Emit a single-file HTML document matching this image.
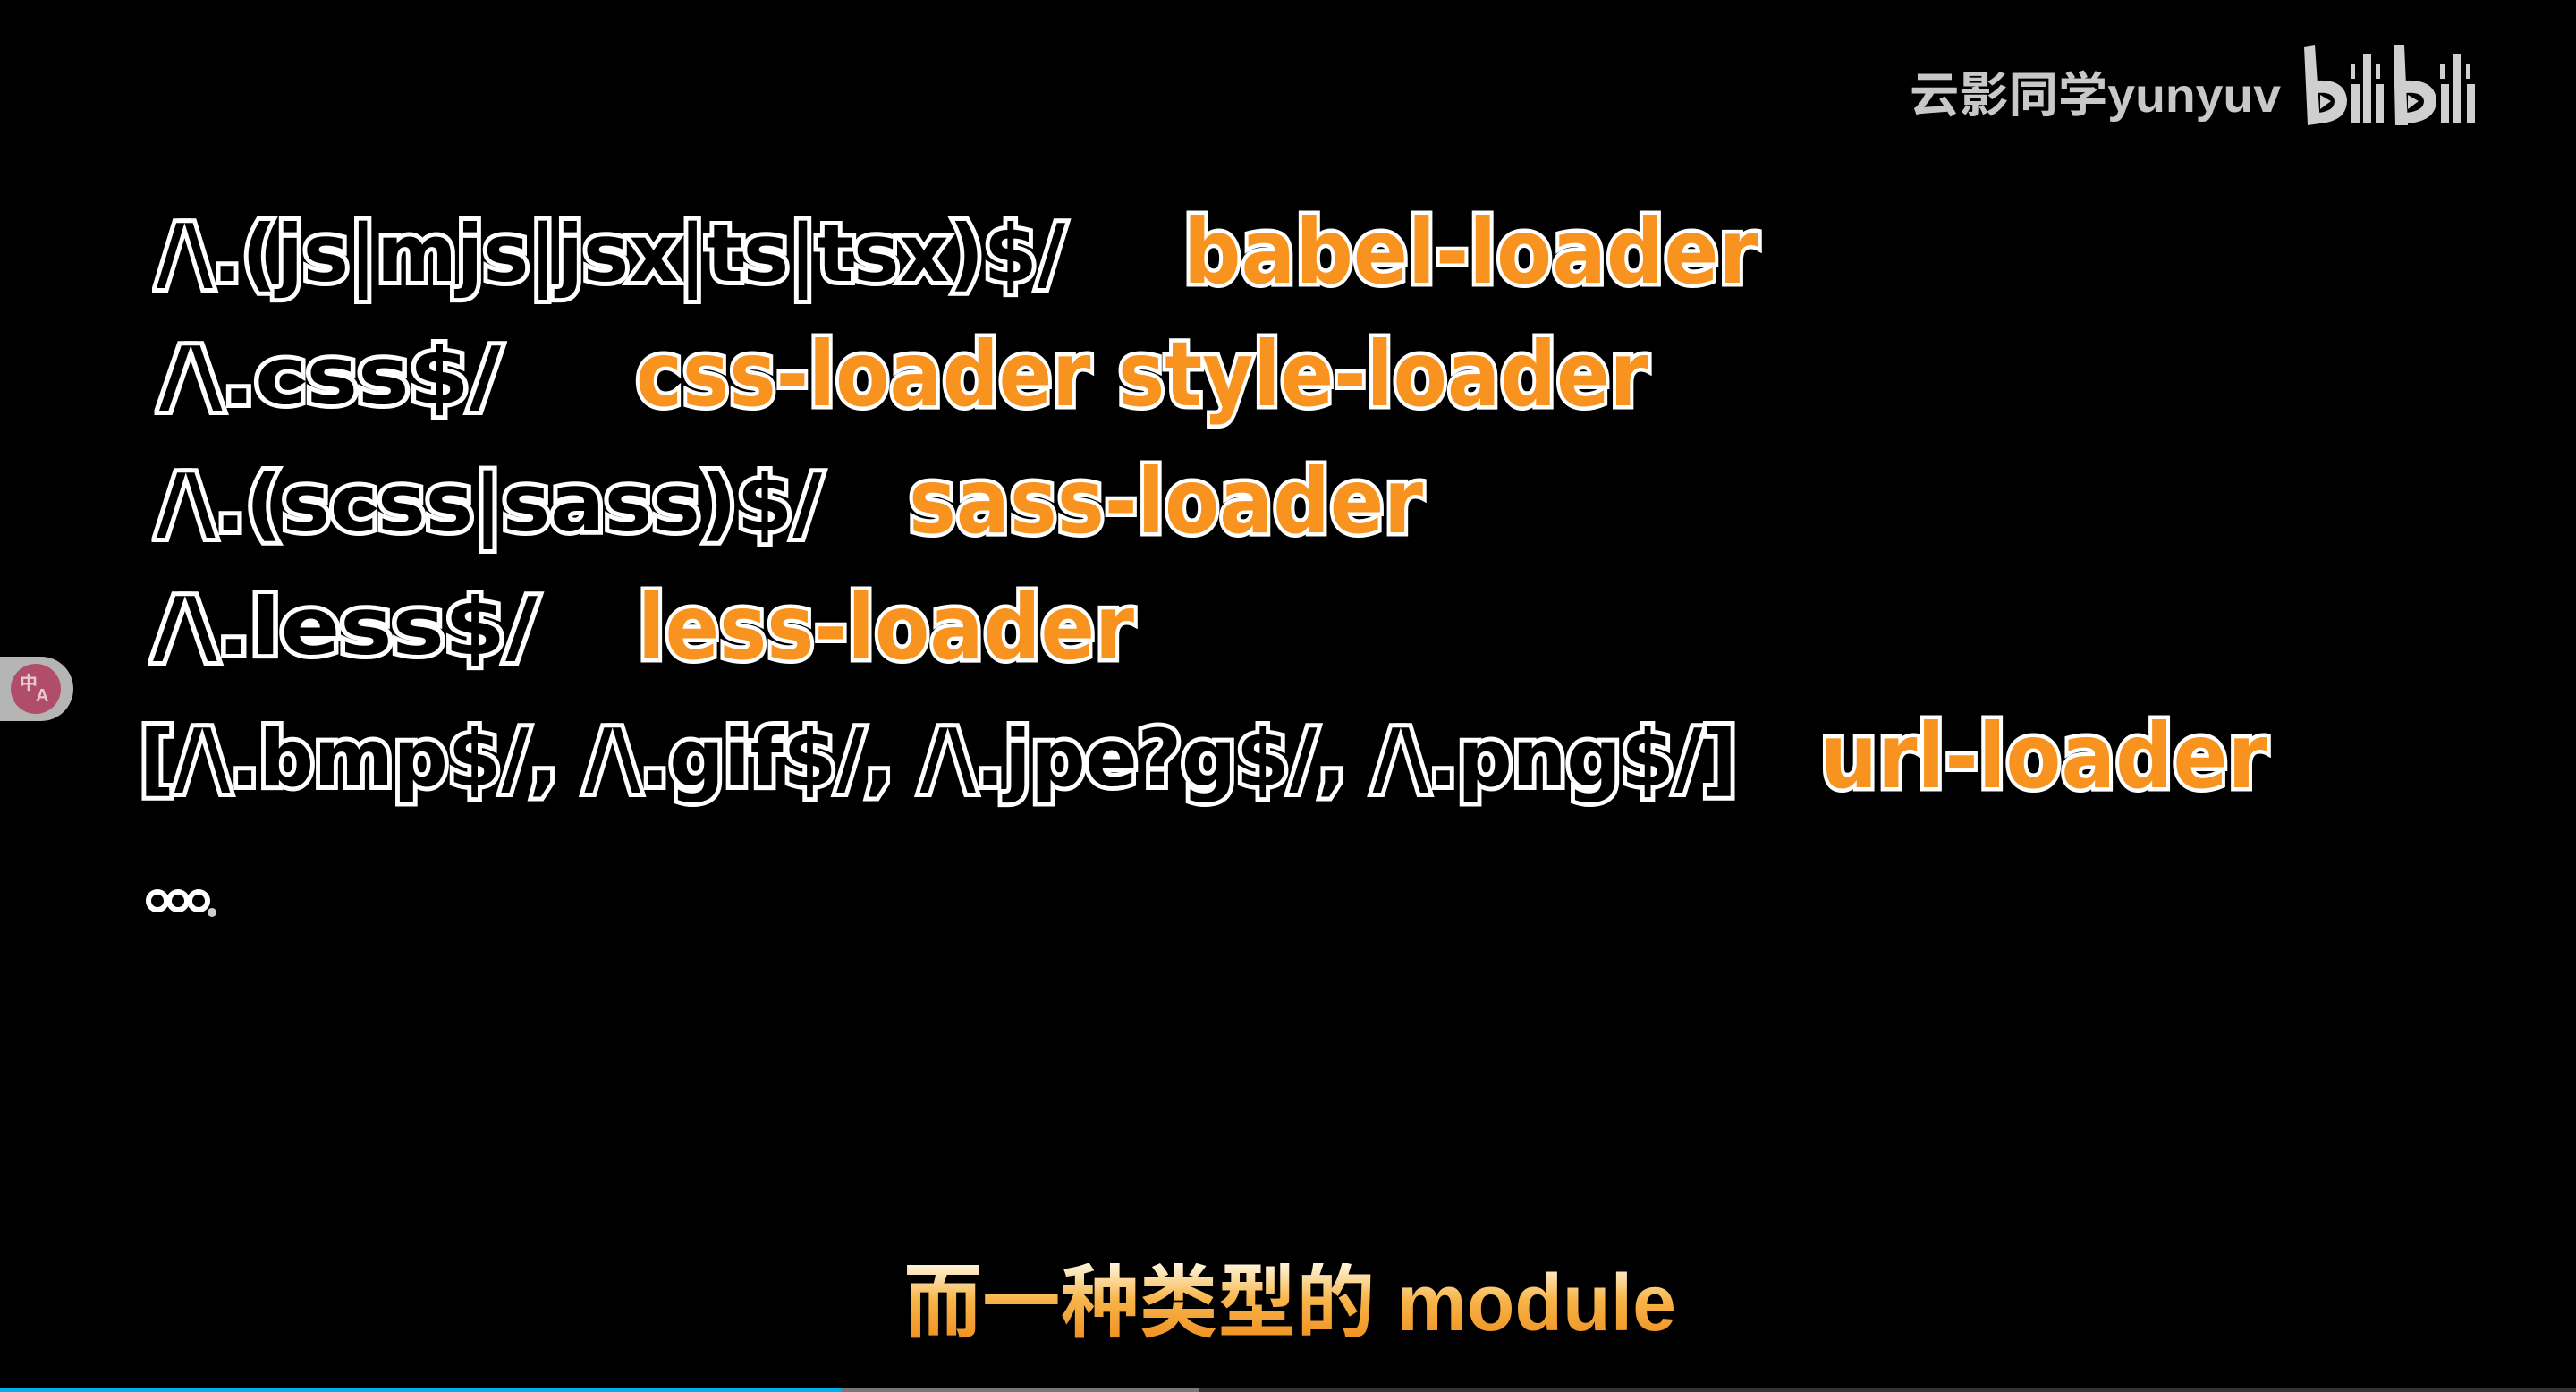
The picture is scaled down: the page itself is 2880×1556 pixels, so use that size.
<!DOCTYPE html>
<html><head><meta charset="utf-8">
<style>
html,body{margin:0;padding:0;background:#000;width:2880px;height:1556px;overflow:hidden;position:relative}
.t{position:absolute;white-space:nowrap;font-family:"DejaVu Sans","Liberation Sans",sans-serif;font-weight:bold;transform-origin:0 50%;line-height:1;paint-order:stroke fill}
.w{font-size:88px;color:#000;-webkit-text-stroke:10px #fff}
.o{font-size:100px;color:#f7931e;-webkit-text-stroke:9px #fff}
.wm{position:absolute;font-family:"Liberation Sans","Noto Sans CJK SC",sans-serif;font-weight:bold;color:#c8c8c8;font-size:54px;white-space:nowrap;transform-origin:0 50%;line-height:1}
.sub{position:absolute;font-family:"Liberation Sans","Noto Sans CJK SC",sans-serif;font-weight:bold;font-size:90px;white-space:nowrap;transform-origin:0 50%;line-height:1;color:#f4a53a;background:linear-gradient(#fff6dd,#f7b54a 45%,#ef8d1c);-webkit-background-clip:text;background-clip:text;-webkit-text-fill-color:transparent}
</style></head><body>
<div class="t w" style="left:175px;top:240px;--w:1016px">/\.(js|mjs|jsx|ts|tsx)$/</div>
<div class="t o" style="left:1323px;top:232px;--w:643px">babel-loader</div>
<div class="t w" style="left:178px;top:377px;--w:382px">/\.css$/</div>
<div class="t o" style="left:711px;top:369px;--w:1132px">css-loader style-loader</div>
<div class="t w" style="left:175px;top:519px;--w:744px">/\.(scss|sass)$/</div>
<div class="t o" style="left:1016px;top:511px;--w:575px">sass-loader</div>
<div class="t w" style="left:171px;top:657px;--w:430px">/\.less$/</div>
<div class="t o" style="left:713px;top:652px;--w:555px">less-loader</div>
<div class="t w" style="left:156px;top:804px;--w:1786px">[/\.bmp$/, /\.gif$/, /\.jpe?g$/, /\.png$/]</div>
<div class="t o" style="left:2035px;top:796px;--w:500px">url-loader</div>
<svg style="position:absolute;left:155px;top:985px" width="100" height="50">
<g fill="#000" stroke="#fff" stroke-width="6"><circle cx="21" cy="22" r="10"/><circle cx="44" cy="22" r="10"/><circle cx="67" cy="22" r="10"/></g>
<circle cx="82" cy="35" r="5" fill="#ccc"/>
</svg>

<div class="sub" style="left:1010px;top:1412px;--w:864px">而一种类型的 module</div>

<div class="wm" style="left:2135px;top:80px;--w:415px">云影同学yunyuv</div>
<svg style="position:absolute;left:2572px;top:50px" width="204" height="94" viewBox="0 0 204 94" fill="#cfcfcf">
<path d="M4 2 L16 0 L22 88 L8 90 Z"/>
<path d="M18 40 Q50 38 52 62 Q52 86 20 88 L20 76 Q38 74 38 63 Q37 52 18 54 Z"/>
<path d="M22 56 L34 63 L22 72 Z"/>
<rect x="56" y="22" width="5" height="16"/><rect x="57" y="44" width="9" height="44"/>
<rect x="70" y="10" width="9" height="78"/>
<rect x="84" y="22" width="5" height="16"/><rect x="84" y="44" width="9" height="44"/>
<path d="M104 0 L116 0 L120 90 L106 90 Z"/>
<path d="M116 40 Q150 38 152 62 Q152 86 118 88 L118 76 Q138 74 138 63 Q137 52 116 54 Z"/>
<path d="M120 56 L132 63 L120 72 Z"/>
<rect x="156" y="22" width="5" height="16"/><rect x="157" y="44" width="9" height="44"/>
<rect x="170" y="10" width="9" height="78"/>
<rect x="185" y="22" width="5" height="16"/><rect x="186" y="44" width="9" height="44"/>
</svg>

<div style="position:absolute;left:0;top:734px;width:82px;height:72px;background:#b5b5b5;border-radius:0 36px 36px 0"></div>
<div style="position:absolute;left:12px;top:742px;width:56px;height:56px;border-radius:50%;background:#b04d6a;color:#e8c8d0;font:bold 20px 'Liberation Sans','Noto Sans CJK SC',sans-serif;line-height:1">
<span style="position:absolute;left:10px;top:12px">中</span><span style="position:absolute;left:28px;top:26px">A</span></div>

<div style="position:absolute;left:0;top:1552px;width:941px;height:4px;background:#00aeec"></div>
<div style="position:absolute;left:941px;top:1552px;width:400px;height:4px;background:#777"></div>
<div style="position:absolute;left:1341px;top:1552px;width:1539px;height:4px;background:#333"></div>
<script>
document.querySelectorAll('.t,.sub,.wm').forEach(function(e){
 var w=parseFloat(getComputedStyle(e).getPropertyValue('--w'));
 var r=e.getBoundingClientRect().width;
 if(w&&r)e.style.transform='scaleX('+(w/r)+')';
});
</script>
</body></html>
